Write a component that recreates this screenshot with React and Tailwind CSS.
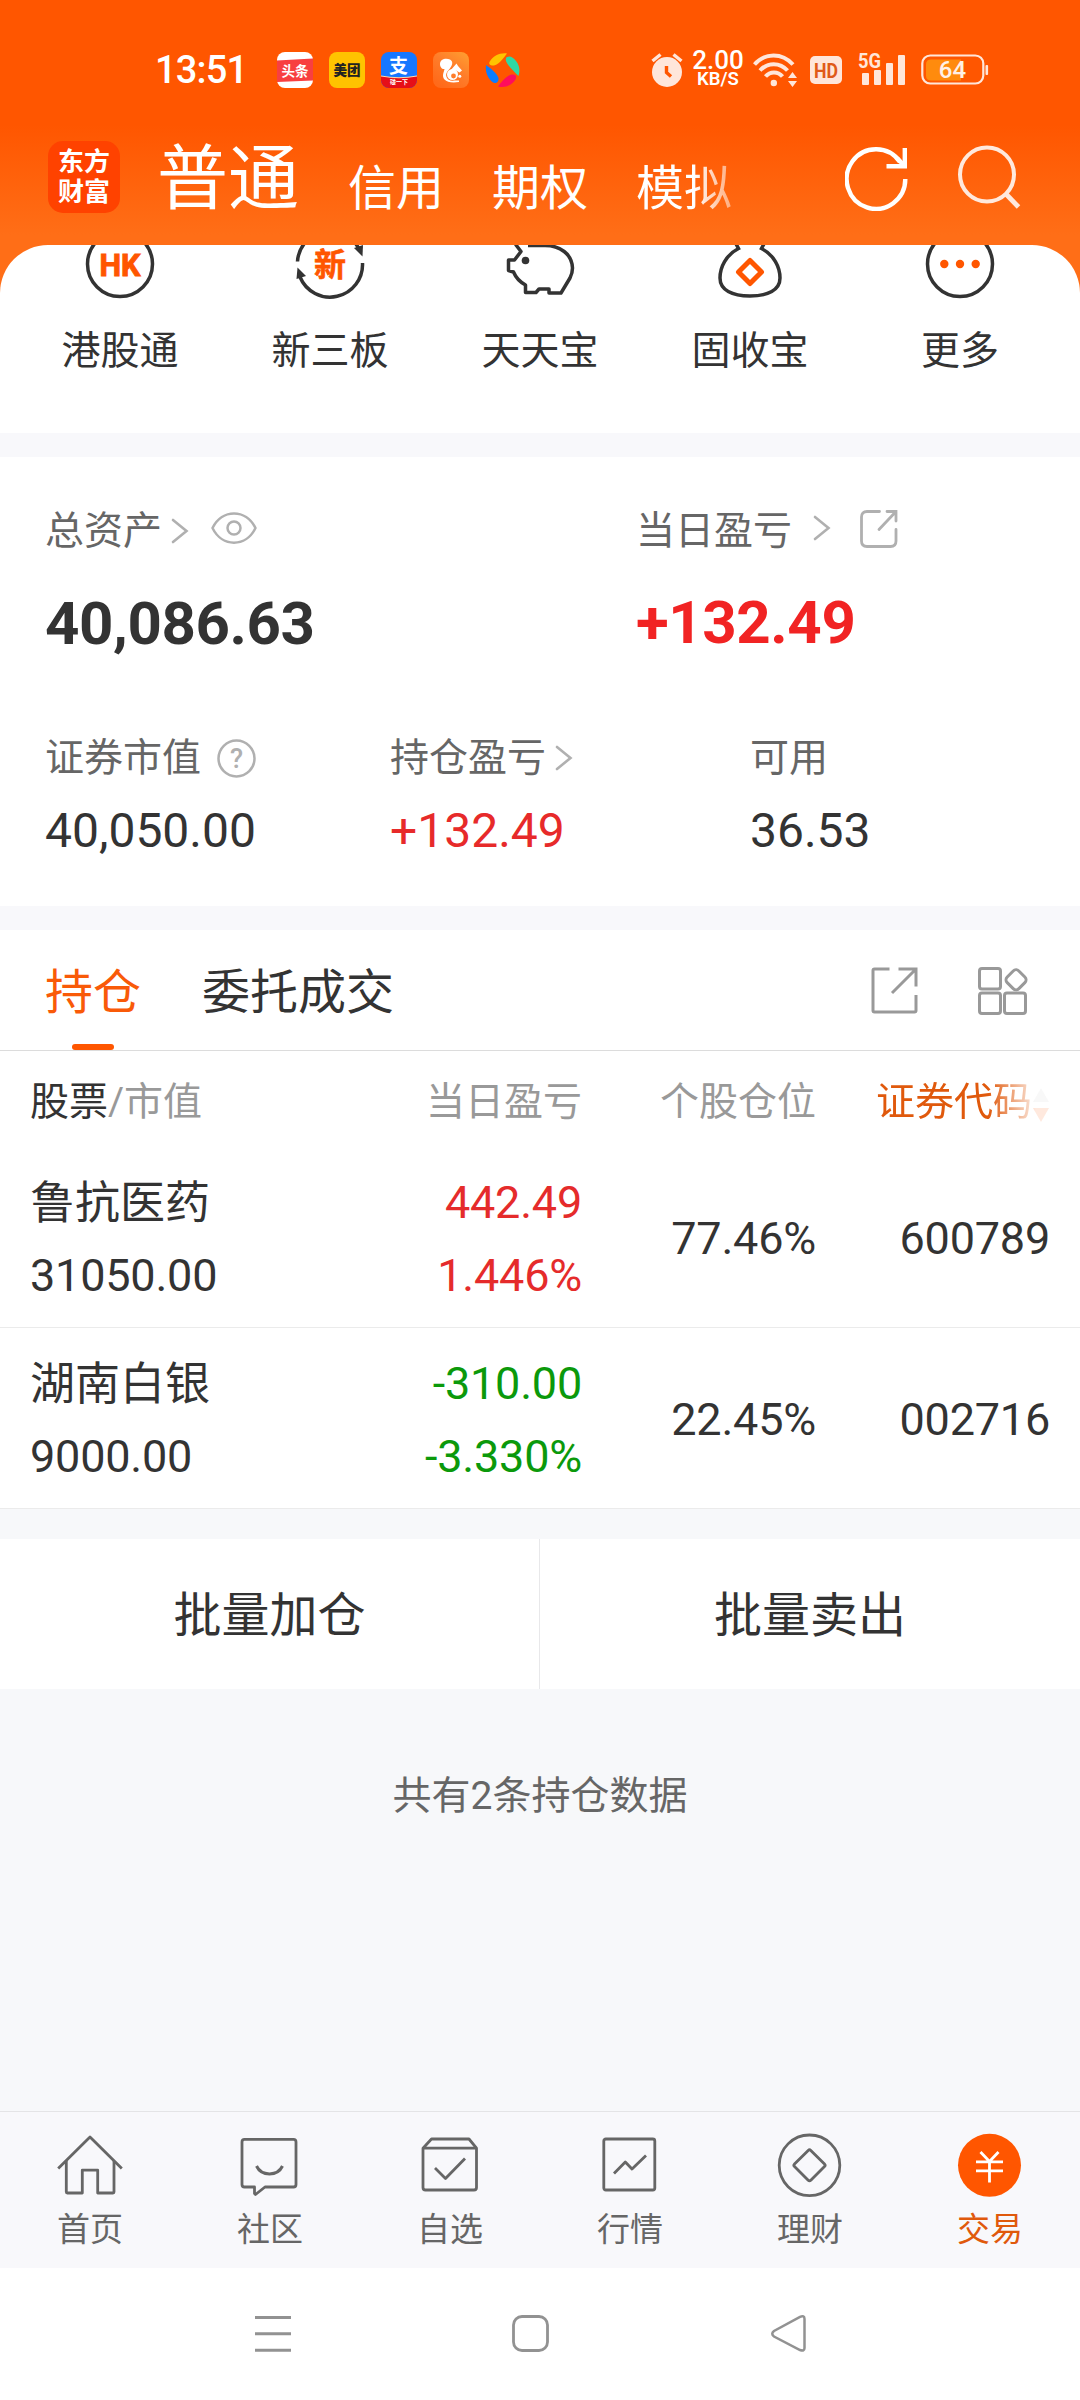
import React from "react";

const shortcuts = [
  { label: "港股通", icon: <HkIcon /> },
  { label: "新三板", icon: <NewBoardIcon /> },
  { label: "天天宝", icon: <PigIcon /> },
  { label: "固收宝", icon: <BagIcon /> },
  { label: "更多", icon: <MoreIcon /> },
];

const holdings = [
  { name: "鲁抗医药", value: "31050.00", profit: "442.49", rate: "1.446%", share: "77.46%", code: "600789", up: true },
  { name: "湖南白银", value: "9000.00", profit: "-310.00", rate: "-3.330%", share: "22.45%", code: "002716", up: false },
];

const tabs = [
  { label: "首页", icon: <HomeIcon /> },
  { label: "社区", icon: <CommunityIcon /> },
  { label: "自选", icon: <WatchIcon /> },
  { label: "行情", icon: <MarketIcon /> },
  { label: "理财", icon: <WealthIcon /> },
  { label: "交易", icon: <TradeIcon />, active: true },
];

/* ---------- shortcut icons ---------- */

function HkIcon() {
  return (
    <svg width="72" height="72" viewBox="0 0 72 72" fill="none">
      <circle cx="36" cy="36" r="32.5" stroke="#333" strokeWidth="3.5" />
      <text x="36" y="47.5" textAnchor="middle" fontSize="32" fontWeight="700" fill="#ff5600" stroke="#ff5600" strokeWidth="1" textLength="41" lengthAdjust="spacingAndGlyphs">HK</text>
    </svg>
  );
}

function NewBoardIcon() {
  return (
    <svg width="72" height="72" viewBox="0 0 72 72" fill="none">
      <path d="M3.5 33.5A32.5 32.5 0 0 1 65 21" stroke="#333" strokeWidth="3.5" />
      <path d="M68.5 35A32.5 32.5 0 0 1 6 49" stroke="#333" strokeWidth="3.5" />
      <path d="M60 20L69 17L68.5 28.5Z" fill="#333" />
      <path d="M3.5 39.500L12 48L2.5 51Z" fill="#333" />
      <text x="36" y="47.5" textAnchor="middle" fontSize="32" fontWeight="700" fill="#ff5600" stroke="#ff5600" strokeWidth="0.6">新</text>
    </svg>
  );
}

function PigIcon() {
  return (
    <svg width="72" height="72" viewBox="0 0 72 72" fill="none">
      <path
        d="M11 12L12 17L17 23.5L10.5 32H4.5V42.5L9.5 44C12 50 16 54 21.5 57V64.5H32L35 61H45V65H57L66 50C68 46 68.5 43 68.5 40C68 26 56 17.5 41 17.5H24"
        stroke="#333"
        strokeWidth="3.5"
        strokeLinejoin="round"
      />
      <circle cx="21.5" cy="32.5" r="3.8" fill="#333" />
    </svg>
  );
}

function BagIcon() {
  return (
    <svg width="72" height="72" viewBox="0 0 72 72" fill="none">
      <path
        d="M21 14L24.5 20.5C12 27 6 39 6 50C6 62 18 68 36 68S66 62 66 50C66 39 60 27 47.5 20.5L51 14"
        stroke="#333"
        strokeWidth="3.5"
      />
      <path d="M36 32.5L47.5 44L36 55.5L24.5 44Z" stroke="#ff5600" strokeWidth="5" strokeLinejoin="round" />
    </svg>
  );
}

function MoreIcon() {
  return (
    <svg width="72" height="72" viewBox="0 0 72 72" fill="none">
      <circle cx="36" cy="36" r="32.5" stroke="#333" strokeWidth="3.5" />
      <circle cx="20.3" cy="36" r="4.2" fill="#ff5600" />
      <circle cx="36" cy="36" r="4.2" fill="#ff5600" />
      <circle cx="51.7" cy="36" r="4.2" fill="#ff5600" />
    </svg>
  );
}

/* ---------- bottom tab icons ---------- */

function HomeIcon() {
  return (
    <svg width="66" height="66" viewBox="0 0 66 66" fill="none" stroke="#666" strokeWidth="2.8" strokeLinejoin="round">
      <path d="M1.2 36.5L33 5L64.8 36.5" />
      <path d="M9.3 29V60q0 1 1 1H25.3V38.2H40.7V61H56q1 0 1-1V29" />
    </svg>
  );
}

function CommunityIcon() {
  return (
    <svg width="66" height="66" viewBox="0 0 66 66" fill="none" stroke="#666" strokeWidth="2.8" strokeLinejoin="round">
      <path d="M7.500 7.4H56.500q2.500 0 2.500 2.500V52.500q0 2.500-2.500 2.500H28L18.500 62.500L17.500 61.500V55H7.500Q5 55 5 52.500V9.900Q5 7.400 7.500 7.400Z" />
      <path d="M19.500 34C24.500 44.500 40.500 44.500 45.500 34" strokeWidth="3" />
    </svg>
  );
}

function WatchIcon() {
  return (
    <svg width="66" height="66" viewBox="0 0 66 66" fill="none" stroke="#666" strokeWidth="2.8" strokeLinejoin="round">
      <path d="M6 16.2L14.5 7H52L59.5 16.2V55.5q0 2.5-2.5 2.5H8.5Q6 58 6 55.5Z" />
      <path d="M6 16.2H59.5" />
      <path d="M18 36L28.5 46.5L48 26.5" />
    </svg>
  );
}

function MarketIcon() {
  return (
    <svg width="66" height="66" viewBox="0 0 66 66" fill="none" stroke="#666" strokeWidth="2.8">
      <rect x="6.8" y="7" width="51" height="51" rx="2" />
      <path d="M17 41.5L28.3 30L35 37L49 23.5" strokeLinejoin="round" />
    </svg>
  );
}

function WealthIcon() {
  return (
    <svg width="66" height="66" viewBox="0 0 66 66" fill="none" stroke="#666" strokeWidth="2.8">
      <circle cx="32.500" cy="33.300" r="30.300" />
      <path d="M31.2 18.5q1.3-1.3 2.6 0L47.5 32q1.3 1.3 0 2.6L33.8 48.2q-1.3 1.3-2.6 0L17.5 34.6q-1.300-1.300 0-2.600Z" />
    </svg>
  );
}

function TradeIcon() {
  return (
    <svg width="66" height="66" viewBox="0 0 66 66">
      <circle cx="32.500" cy="33.300" r="31.500" fill="#ff5600" />
      <g stroke="#fff" strokeWidth="2.8" fill="none">
        <path d="M23.5 20L32.5 29.5L41.5 20M32.5 29V50.5M19 29.8H46M19 38.8H46" />
      </g>
    </svg>
  );
}

/* ---------- small icons ---------- */

function Chevron({ className }) {
  return (
    <svg className={className} width="18" height="26" viewBox="0 0 18 26" fill="none" stroke="#b0b0b0" strokeWidth="2.6" strokeLinecap="round">
      <path d="M2 2L15.5 13L2 24" />
    </svg>
  );
}

function Arrow({ dir, className }) {
  return (
    <svg className={className} width="16" height="14" viewBox="0 0 16 14">
      <path d={dir === "up" ? "M8 0L16 14H0Z" : "M0 0H16L8 14Z"} fill="currentColor" />
    </svg>
  );
}

function StatusBar() {
  return (
    <div className="flex h-[36px] items-center pl-[155px]">
      <span className="w-[122px] text-[38px] font-medium leading-none tracking-[-0.8px] text-white">13:51</span>
      <div className="flex gap-[16px]">
        <svg width="36" height="36" viewBox="0 0 36 36">
          <rect width="36" height="36" rx="8" fill="#fff" />
          <path d="M0 8.5L36 6.5V28.5L0 30Z" fill="#f83f40" />
          <text x="18" y="23.5" textAnchor="middle" fontSize="13.5" fontWeight="700" fill="#fff">头条</text>
        </svg>
        <svg width="36" height="36" viewBox="0 0 36 36">
          <rect width="36" height="36" rx="8" fill="#ffc300" />
          <text x="18" y="23" textAnchor="middle" fontSize="13.5" fontWeight="900" fill="#222">美团</text>
        </svg>
        <svg width="36" height="36" viewBox="0 0 36 36">
          <clipPath id="pay"><rect width="36" height="36" rx="8" /></clipPath>
          <g clipPath="url(#pay)">
            <rect width="36" height="36" fill="#1777ff" />
            <path d="M0 24Q18 27.5 36 24V36H0Z" fill="#e60f18" />
            <path d="M0 24Q18 27.5 36 24" stroke="#ffd9a8" strokeWidth="1.2" fill="none" />
          </g>
          <text x="17.5" y="21" textAnchor="middle" fontSize="19" fontWeight="700" fill="#fff">支</text>
          <text x="18" y="32.3" textAnchor="middle" fontSize="6" fontWeight="700" fill="#fff">碰一下</text>
        </svg>
        <svg width="36" height="36" viewBox="0 0 36 36">
          <defs>
            <linearGradient id="squirrel" x1="1" y1="0" x2="0.3" y2="1">
              <stop offset="0" stopColor="#ffa030" />
              <stop offset="0.5" stopColor="#ff7d2a" />
              <stop offset="1" stopColor="#ff6a1a" />
            </linearGradient>
          </defs>
          <rect width="36" height="36" rx="8" fill="url(#squirrel)" />
          <path d="M7 12C7 7 13 5.5 17 7.500C21 10 19 14 16.500 17C14 20 12 22 14 26C15.500 28.500 18 29 21 28.500H26V30C20 31 14 30.500 11.500 27.500C8.500 24 11 20 11.500 17C9 17.500 7 15 7 12Z" fill="#fff" />
          <path d="M17 19L23.500 11.500L25 14L29 18.500L26.500 20.500L23 18.500Z" fill="#fff" />
          <circle cx="19.500" cy="22.500" r="5.500" fill="#fff" />
          <circle cx="20.500" cy="24" r="2.400" fill="#ff7d2a" />
          <circle cx="26.800" cy="24.300" r="1.500" fill="#fff" />
        </svg>
        <svg width="36" height="36" viewBox="0 0 36 36">
          <path d="M4.5 10C8 4 15 0.5 22 1.5C19 5 15 12 9 13.5C5.5 14 3.5 12 4.5 10Z" fill="#ffc400" />
          <path d="M22 5C25 3.5 28 5 31 9C35 14 35 19 33.5 24C30 20 22 13 21 9C20.5 7 21 5.5 22 5Z" fill="#2fd8a4" />
          <path d="M1 13C5 16 12 21 13.5 26C14 30 11 32 8 30.5C3 27 0 20 1 13Z" fill="#0b7dff" />
          <path d="M13 34.5C16 31 21 23.5 27 22.5C31 22 32 25 30.5 27.5C27 33 20 36.5 13 34.5Z" fill="#ff0d5c" />
        </svg>
      </div>
      <svg className="ml-[130px]" width="32" height="36" viewBox="0 0 32 36">
        <circle cx="16" cy="20" r="15" fill="#ffe6da" />
        <path d="M1.5 9L9.5 2.5M30.5 9L22.5 2.5" stroke="#ffe6da" strokeWidth="3.4" />
        <path d="M15.5 14V20.5L20 24.5" stroke="#ff5600" strokeWidth="3.4" fill="none" />
      </svg>
      <div className="ml-[8px] flex w-[54px] flex-col items-center font-medium text-white">
        <span className="text-[26px] leading-[19px]">2.00</span>
        <span className="text-[18.5px] font-semibold leading-[19px]">KB/S</span>
      </div>
      <svg className="ml-[8px]" width="45" height="36" viewBox="0 0 45 36" fill="none" stroke="#ffe6da" strokeWidth="4">
        <path d="M1.5 12.5C12 0.5 29 0.5 40 12.5" />
        <path d="M7 18.5C14.5 10 27 10 34.5 18.5" />
        <path d="M12.5 24.5C17 19 25 19 29.500 24.500" />
        <circle cx="20.8" cy="31" r="3.2" fill="#ffe6da" stroke="none" />
        <path d="M39.5 20L44 26H35ZM39.5 35L44 29H35Z" fill="#ffe6da" stroke="none" />
      </svg>
      <svg className="ml-[12px]" width="32" height="28" viewBox="0 0 32 28">
        <rect width="32" height="28" rx="5" fill="#ffe6da" />
        <text x="16" y="21.500" textAnchor="middle" fontSize="21" fontWeight="700" fill="#e05a18" textLength="24" lengthAdjust="spacingAndGlyphs">HD</text>
      </svg>
      <svg className="-mt-[4px] ml-[16px]" width="48" height="40" viewBox="0 -4 48 40" fill="#ffe6da">
        <text x="0" y="15.5" fontSize="20" fontWeight="700" textLength="23" lengthAdjust="spacingAndGlyphs">5G</text>
        <rect x="4" y="21" width="7" height="12" rx="1" />
        <rect x="16" y="18" width="7" height="15" rx="1" />
        <rect x="28" y="11" width="7" height="22" rx="1" />
        <rect x="40" y="3" width="7" height="30" rx="1" />
      </svg>
      <svg className="ml-[15px]" width="68" height="32" viewBox="0 0 68 32">
        <rect x="1.3" y="1.5" width="61" height="28" rx="8" fill="none" stroke="#ffe6da" strokeWidth="2.2" />
        <path d="M10 5.5H40V26.5H10Q5 26.5 5 21.5V10.5Q5 5.5 10 5.5Z" fill="#ff8b0d" />
        <rect x="64.500" y="11" width="2.600" height="10" rx="1" fill="#ffe6da" />
        <text x="31.500" y="24" textAnchor="middle" fontSize="24" fontWeight="500" fill="#fff1e6">64</text>
      </svg>
    </div>
  );
}

function Header() {
  return (
    <div className="h-[294px] bg-[linear-gradient(to_bottom,#ff5600_0px,#ff5600_125px,#ff6e17_235px,#ff6e17_294px)] pt-[52px]">
      <StatusBar />
      <div className="mt-[53px] flex h-[72px] items-start pl-[48px] text-white">
        <div className="flex h-[72px] w-[72px] flex-col items-center justify-center rounded-[15px] bg-[#ff4200] text-[26px] font-bold leading-[30px]">
          <span>东方</span>
          <span>财富</span>
        </div>
        <div className="ml-[37px] flex h-[72px] w-[580px] items-start gap-[48px]">
          <span className="text-[71px] leading-[75px]">普通</span>
          <span className="ml-px text-[48px] leading-[96px]">信用</span>
          <span className="text-[48px] leading-[96px]">期权</span>
          <span className="bg-linear-to-r from-white from-60% to-white/45 bg-clip-text text-[48px] leading-[96px] text-transparent">模拟</span>
        </div>
        <svg className="ml-[108px] mt-[4px]" width="64" height="66" viewBox="0 0 64 66" fill="none" stroke="#fff" strokeWidth="4.4">
          <path d="M60.3 34A29.3 29.8 0 1 1 55 17" />
          <path d="M59.8 3V21.3H41.5" />
          <path d="M52 13L60 21.5" />
        </svg>
        <svg className="ml-[48px] mt-[4px]" width="64" height="66" viewBox="0 0 64 66" fill="none" stroke="#ffe9dd" strokeWidth="4">
          <circle cx="30" cy="29.5" r="27" />
          <path d="M48.5 48.5L61.5 62" strokeWidth="4.8" />
        </svg>
      </div>
    </div>
  );
}

function Assets() {
  return (
    <div className="h-[449px] bg-white pl-[45px] pt-[49px]">
      <div className="flex h-[50px] text-[39px] leading-[50px] text-[#666]">
        <div className="flex w-[591px] items-center">
          <span>总资产</span>
          <Chevron className="ml-[9px]" />
          <svg className="ml-[22px] mb-[7px]" width="46" height="32" viewBox="0 0 46 32" fill="none" stroke="#b0b0b0" strokeWidth="2.5">
            <path d="M1.5 16C11 -3.5 35 -3.5 44.5 16C35 35.5 11 35.5 1.5 16Z" strokeLinejoin="round" />
            <circle cx="23" cy="16" r="6.5" />
          </svg>
        </div>
        <span>当日盈亏</span>
        <Chevron className="ml-[21px] mt-[9px]" />
        <svg className="ml-[28px] mt-[3px]" width="40" height="40" viewBox="0 0 40 40" fill="none" stroke="#b0b0b0" strokeWidth="2.8" strokeLinecap="round">
          <path d="M20.5 2.5H8Q2.5 2.5 2.5 8V32Q2.5 37.5 8 37.5H31.5Q37 37.5 37 32V20.5" />
          <path d="M28 2.5H37V12M37 2.5L20 20.5" />
        </svg>
      </div>
      <div className="mt-[33px] flex h-[70px] text-[60px] font-bold leading-[70px] tracking-[-0.4px] text-[#333]">
        <span className="w-[591px]">40,086.63</span>
        <span className="-mt-px text-[#f12323]">+132.49</span>
      </div>
      <div className="mt-[74px] flex">
        <div className="w-[345px]">
          <div className="flex h-[50px] items-center text-[39px] leading-[50px] text-[#666]">
            <span>证券市值</span>
            <svg className="ml-[16px]" width="39" height="39" viewBox="0 0 39 39">
              <circle cx="19.5" cy="19.5" r="18" fill="none" stroke="#b0b0b0" strokeWidth="2.5" />
              <text x="19.5" y="29" textAnchor="middle" fontSize="27" fontWeight="500" fill="#b0b0b0">?</text>
            </svg>
          </div>
          <div className="mt-[18px] text-[48px] leading-[60px] text-[#333]">40,050.00</div>
        </div>
        <div className="w-[360px]">
          <div className="flex h-[50px] items-center text-[39px] leading-[50px] text-[#666]">
            <span>持仓盈亏</span>
            <Chevron className="ml-[9px]" />
          </div>
          <div className="mt-[18px] text-[48px] leading-[60px] text-[#e72a2a]">+132.49</div>
        </div>
        <div>
          <div className="h-[50px] text-[39px] leading-[50px] text-[#666]">可用</div>
          <div className="mt-[18px] text-[48px] leading-[60px] text-[#333]">36.53</div>
        </div>
      </div>
    </div>
  );
}

function HoldingRow({ item }) {
  const color = item.up ? "text-[#e52b2b]" : "text-[#0b990b]";
  return (
    <div className="flex h-[181px] items-start border-b border-[#ebebeb] px-[30px] text-[45px] text-[#333]">
      <div className="w-[300px] pt-[20px]">
        <div className="leading-[73px]">{item.name}</div>
        <div className="leading-[72px] tracking-[-0.2px]">{item.value}</div>
      </div>
      <div className={"w-[252px] pt-[19px] text-right tracking-[-0.2px] " + color}>
        <div className="leading-[73px]">{item.profit}</div>
        <div className="leading-[73px]">{item.rate}</div>
      </div>
      <div className="w-[234px] text-right leading-[183px] tracking-[-0.2px]">{item.share}</div>
      <div className="w-[234px] text-right leading-[183px] tracking-[-0.2px]">{item.code}</div>
    </div>
  );
}

function Holdings() {
  return (
    <div className="bg-white">
      <div className="flex h-[121px] border-b border-[#dcdcdc] pl-[45px] text-[48px]">
        <div className="flex w-[96px] flex-col items-center text-[#f95a08]">
          <span className="h-[114px] leading-[125px]">持仓</span>
          <span className="h-[6px] w-[42px] rounded-full bg-[#ff5600]" />
        </div>
        <span className="ml-[61px] w-[192px] leading-[125px] text-[#333]">委托成交</span>
        <svg className="ml-[476px] mt-[36px]" width="48" height="48" viewBox="0 0 48 48" fill="none" stroke="#999" strokeWidth="3">
          <path d="M19.5 3H4.5Q3 3 3 4.5V44.5Q3 46 4.5 46H44.5Q46 46 46 44.5V29" />
          <path d="M28.5 3H46V20.5M45.5 3.5L22 27" />
        </svg>
        <svg className="ml-[59px] mt-[35px]" width="52" height="50" viewBox="0 0 52 50" fill="none" stroke="#999" strokeWidth="3">
          <rect x="2.5" y="3.5" width="21" height="20.5" rx="2.5" />
          <rect x="2.5" y="28" width="21" height="20.5" rx="2.5" />
          <rect x="27.5" y="28" width="21" height="20.5" rx="2.5" />
          <rect x="30.8" y="6.5" width="16.500" height="16.500" rx="4" transform="rotate(45 39 14.75)" />
        </svg>
      </div>
      <div className="flex h-[96px] pl-[30px] text-[39px] leading-[102px] text-[#999]">
        <div className="w-[300px]">
          <span className="text-[#333]">股票</span>/市值
        </div>
        <div className="w-[252px] text-right">当日盈亏</div>
        <div className="w-[234px] text-right">个股仓位</div>
        <div className="ml-[60px] flex text-[#e0590c] [mask-image:linear-gradient(to_right,#000_112px,rgba(0,0,0,0.22)_154px,rgba(0,0,0,0.13)_160px,rgba(0,0,0,0.13)_180px)]">
          <span>证券代码</span>
          <div className="ml-px flex flex-col gap-[6px] pt-[37px]">
            <Arrow dir="up" className="text-[#ccc]" />
            <Arrow dir="down" className="text-[#ff5600]" />
          </div>
        </div>
      </div>
      {holdings.map((item) => (
        <HoldingRow key={item.code} item={item} />
      ))}
    </div>
  );
}

function TabBar() {
  return (
    <div className="flex h-[157px] border-t border-[#e4e4e6] bg-[#f8f8fb]">
      {tabs.map((tab) => (
        <div key={tab.label} className="flex w-[180px] flex-col items-center pt-[20px]">
          {tab.icon}
          <span className={"mt-[11px] text-[33px] leading-[42px] " + (tab.active ? "text-[#e0590c]" : "text-[#666]")}>
            {tab.label}
          </span>
        </div>
      ))}
    </div>
  );
}

function SystemNav() {
  return (
    <div className="flex h-[132px] bg-white pl-[254px] pt-[46px]">
      <svg width="38" height="40" viewBox="0 0 38 40" stroke="#929292" strokeWidth="3">
        <path d="M1 3.5H37M1 19.8H37M1 36.2H37" />
      </svg>
      <svg className="ml-[219px]" width="40" height="40" viewBox="0 0 40 40" fill="none" stroke="#929292" strokeWidth="2.8">
        <rect x="2.5" y="2.5" width="34" height="34" rx="8.5" />
      </svg>
      <svg className="ml-[219px]" width="38" height="40" viewBox="0 0 38 40" fill="none" stroke="#929292" strokeWidth="2.5">
        <path d="M30 2.8Q34.5 1 34.5 5V34Q34.5 37.5 30 36L4 22.5Q0.5 19.8 4 17Z" />
      </svg>
    </div>
  );
}

export default function App() {
  return (
    <div className="flex h-[2400px] w-[1080px] flex-col overflow-hidden bg-[#f7f8fa] font-['Roboto','Noto_Sans_CJK_SC',sans-serif]">
      <Header />
      <div className="-mt-[49px] flex h-[188px] shrink-0 overflow-hidden rounded-t-[48px] bg-white px-[15px]">
        {shortcuts.map((s) => (
          <div key={s.label} className="-mt-[17px] flex w-[210px] flex-col items-center">
            {s.icon}
            <span className="mt-[26px] text-[39px] leading-[50px] text-[#333]">{s.label}</span>
          </div>
        ))}
      </div>
      <div className="h-[24px] bg-[#f8f8fb]" />
      <Assets />
      <div className="h-[24px] bg-[#f8f8fb]" />
      <Holdings />
      <div className="mt-[30px] flex h-[150px] bg-white text-center text-[48px] leading-[154px] text-[#333]">
        <div className="w-[540px] border-r border-[#e8e8ea]">批量加仓</div>
        <div className="w-[540px]">批量卖出</div>
      </div>
      <div className="grow pt-[81px] text-center text-[39px] leading-[52px] text-[#666]">共有2条持仓数据</div>
      <TabBar />
      <SystemNav />
    </div>
  );
}
